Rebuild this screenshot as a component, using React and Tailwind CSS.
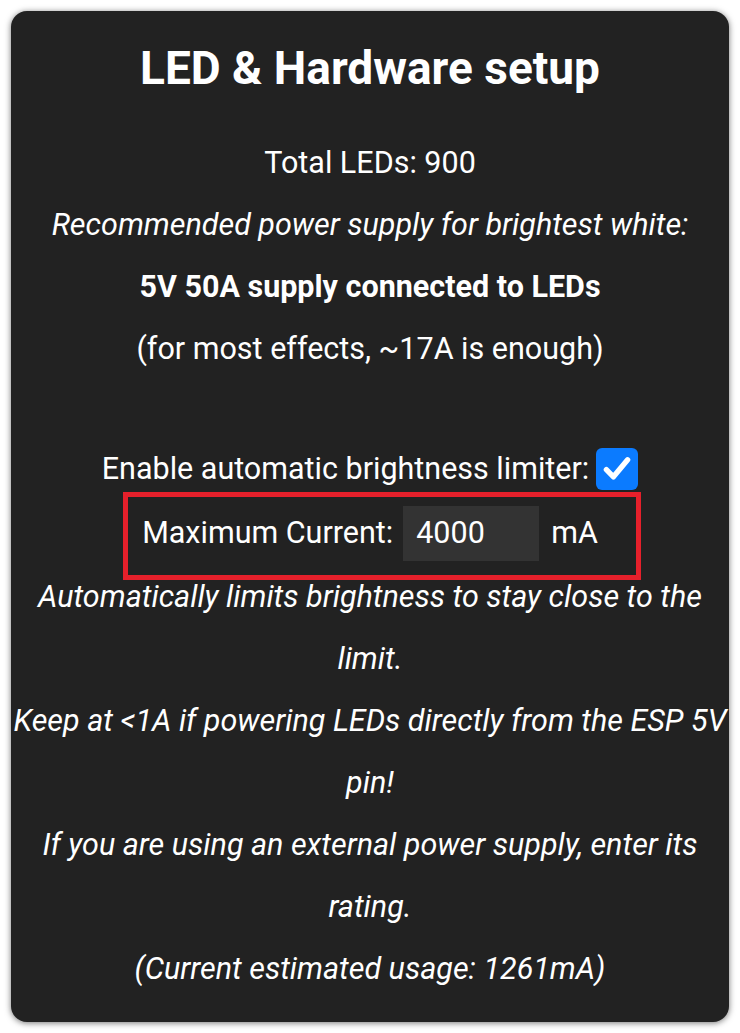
import React from "react";

function Check() {
  return (
    <span className="ml-[7px] inline-flex h-[42px] w-[42px] items-center justify-center rounded-[6px] bg-[#0b7bff]">
      <svg viewBox="0 0 24 24" className="h-[34px] w-[34px]" fill="none">
        <path d="M4.5 12.5l5 5L19.5 5.5" stroke="white" strokeWidth="3.8" strokeLinecap="round" strokeLinejoin="round" />
      </svg>
    </span>
  );
}

export default function App() {
  return (
    <div className="min-h-screen bg-white p-[11px]" style={{ fontFamily: "Roboto, 'Noto Sans', sans-serif" }}>
      <div className="h-[1011px] rounded-[16px] bg-[#222222] pt-[34px] text-center text-[30.5px] leading-[62px] text-white shadow-[0_1px_6px_rgba(0,0,0,0.55)]">
        <h2 className="text-[46px] font-bold leading-[46px]">LED &amp; Hardware setup</h2>
        <div className="mt-[41px]">
          <div>Total LEDs: 900</div>
          <div className="italic">Recommended power supply for brightest white:</div>
          <div className="font-bold">5V 50A supply connected to LEDs</div>
          <div>(for most effects, ~17A is enough)</div>
          <div className="h-[58px]" />
          <div className="flex items-center justify-center">
            <span>Enable automatic brightness limiter:</span>
            <Check />
          </div>
          <div className="flex h-[66px] items-center justify-center">
            <div className="relative flex items-center">
              <span>Maximum Current:</span>
              <span className="ml-[10px] flex h-[55px] w-[136px] items-center bg-[#333333] pl-[13px] leading-none">4000</span>
              <span className="ml-[12px]">mA</span>
              <div className="absolute -bottom-[16px] -left-[19px] -right-[43px] -top-[10px] border-[5px] border-[#e6202b]" />
            </div>
          </div>
          <div className="italic">
            Automatically limits brightness to stay close to the
            <br />
            limit.
            <br />
            <span className="whitespace-nowrap">Keep at &lt;1A if powering LEDs directly from the ESP 5V</span>
            <br />
            pin!
            <br />
            If you are using an external power supply, enter its
            <br />
            rating.
            <br />
            (Current estimated usage: 1261mA)
          </div>
        </div>
      </div>
    </div>
  );
}
